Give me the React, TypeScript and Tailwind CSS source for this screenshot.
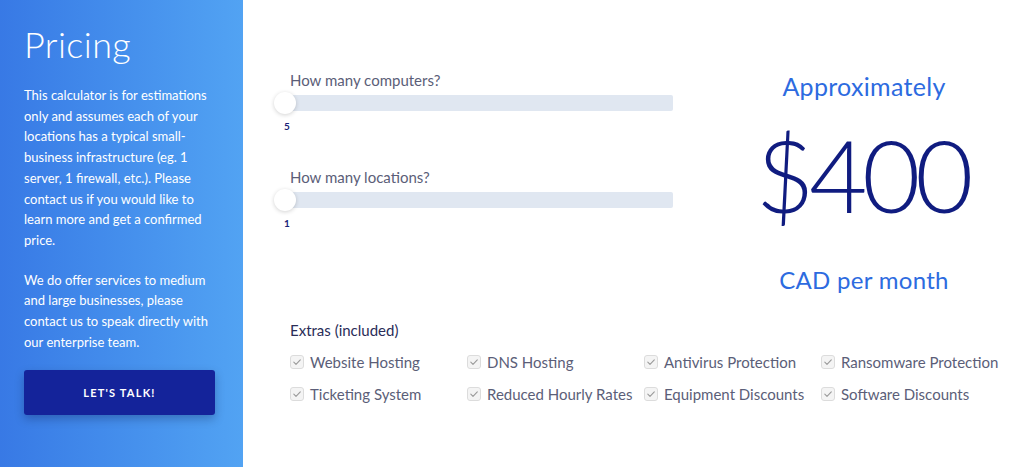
import React from "react";

const extras = [
  "Website Hosting",
  "DNS Hosting",
  "Antivirus Protection",
  "Ransomware Protection",
  "Ticketing System",
  "Reduced Hourly Rates",
  "Equipment Discounts",
  "Software Discounts",
];

function Check() {
  return (
    <span className="flex h-[14px] w-[14px] shrink-0 items-center justify-center rounded-[3px] border border-[#dcdcdc] bg-[#f4f4f4]">
      <svg width="10" height="10" viewBox="0 0 10 10" fill="none">
        <path d="M1.8 5.2 L4 7.3 L8.3 2.8" stroke="#9a9a9a" strokeWidth="1.1" strokeLinecap="round" strokeLinejoin="round" />
      </svg>
    </span>
  );
}

function Slider({ label, value }: { label: string; value: string }) {
  return (
    <div className="flex flex-col">
      <div className="pl-[6px] text-[15px] leading-[20px] text-[#5b5e78]">{label}</div>
      <div className="relative mt-[5px] h-[16px] w-[389px] rounded-[2px] bg-[#e0e7f1]">
        <div className="absolute left-[-10px] top-[-3px] h-[22px] w-[22px] rounded-full bg-white shadow-[0_1px_4px_rgba(0,0,0,0.18)]" />
      </div>
      <div className="mt-[9px] text-[10px] font-bold leading-[12px] text-[#1a2378]">{value}</div>
    </div>
  );
}

export default function App() {
  return (
    <div
      className="flex h-[467px] w-[1024px] overflow-hidden bg-white"
      style={{ fontFamily: "Lato, 'Noto Sans', sans-serif" }}
    >
      <aside className="flex w-[243px] shrink-0 flex-col bg-gradient-to-r from-[#3879e5] to-[#52a3f3] px-[24px] pt-[22px] text-white">
        <h1 className="text-[36px] font-light leading-[44px] tracking-[0.4px]">Pricing</h1>
        <p className="mt-[19px] text-[13px] leading-[20.7px]">
          This calculator is for estimations only and assumes each of your locations has a typical small-business
          infrastructure (eg. 1 server, 1 firewall, etc.). Please contact us if you would like to learn more and get a
          confirmed price.
        </p>
        <p className="mt-[19px] text-[13px] leading-[20.7px]">
          We do offer services to medium and large businesses, please contact us to speak directly with our enterprise
          team.
        </p>
        <button className="mt-[18px] flex h-[45px] w-[191px] items-center justify-center rounded-[3px] bg-[#14239a] text-[11px] font-bold tracking-[1.2px] text-white shadow-[0_4px_10px_rgba(0,0,40,0.25)]">
          LET'S TALK!
        </button>
      </aside>

      <main className="flex flex-1 flex-col pl-[41px] pr-[20px]">
        <div className="flex">
          <div className="flex flex-col gap-[35px] pt-[70px]">
            <Slider label="How many computers?" value="5" />
            <Slider label="How many locations?" value="1" />
          </div>
          <div className="flex flex-1 flex-col items-center pt-[70px] pl-[34px] text-[#2d6be0]">
            <div className="text-[25px] leading-[32px] tracking-[0.3px]">Approximately</div>
            <div className="mt-[17px] pr-[4px] text-[101px] font-light leading-[110px] tracking-[-5.5px] text-[#101c80]">$400</div>
            <div className="mt-[35px] text-[24px] leading-[32px] tracking-[0.3px]">CAD per month</div>
          </div>
        </div>
        <div className="mt-[24px] pl-[6px] text-[15px] leading-[20px] text-[#2a2d58]">Extras (included)</div>
        <div className="mt-[12px] grid grid-cols-[177px_177px_177px_200px] gap-y-[12px] pl-[6px]">
          {extras.map((e) => (
            <div key={e} className="flex items-center gap-[6px] text-[15px] leading-[20px] text-[#5b5e78]">
              <Check />
              <span>{e}</span>
            </div>
          ))}
        </div>
      </main>
    </div>
  );
}
